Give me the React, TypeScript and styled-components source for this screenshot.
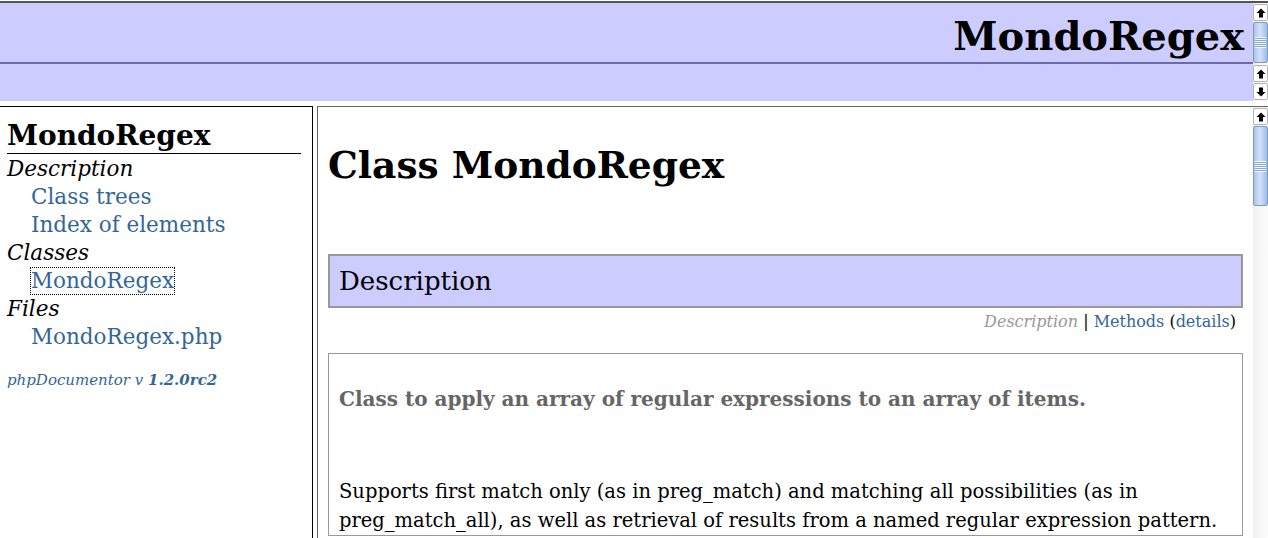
import React from 'react';
import styled, { createGlobalStyle } from 'styled-components';

const GlobalStyle = createGlobalStyle`
  html, body {
    margin: 0;
    padding: 0;
    background: #ffffff;
  }
  body {
    font-family: "DejaVu Serif", Georgia, serif;
    color: #000;
    overflow: hidden;
  }
`

const Page = styled.div`
  width: 1268px;
  height: 538px;
  display: flex;
  flex-direction: column;
  overflow: hidden;
`

/* ---------- scrollbars ---------- */

const ScrollBar = styled.div`
  width: 15px;
  flex: none;
  display: flex;
  flex-direction: column;
  gap: 1px;
  padding-top: 1px;
  background: linear-gradient(to right, #f1f1f1, #fcfcfc);
`

const ArrowButton = styled.div<{ $h?: number }>`
  height: ${({ $h }) => $h ?? 17}px;
  flex: none;
  box-sizing: border-box;
  border: 1px solid #b4b4b4;
  border-radius: 2px;
  background: #ffffff;
  display: flex;
  align-items: center;
  justify-content: center;
`

const Thumb = styled.div<{ $h: number }>`
  height: ${({ $h }) => $h}px;
  flex: none;
  box-sizing: border-box;
  border: 1px solid #7f9db9;
  border-radius: 2px;
  background: linear-gradient(to right, #a9c3ec, #d3e2f9 45%, #bcd2f4 70%, #9fbbe8);
  display: flex;
  align-items: center;
  justify-content: center;
`

const Grip = styled.div`
  width: 11px;
  height: 11px;
  background: repeating-linear-gradient(
    to bottom,
    #f4f8ff 0px,
    #f4f8ff 1px,
    #8ca9d6 1px,
    #8ca9d6 2px
  );
`

const Arrow: React.FC<{ down?: boolean }> = ({ down }) => (
  <svg width="10" height="10" viewBox="0 0 10 10" style={down ? { transform: 'rotate(180deg)' } : undefined}>
    <path d="M5 0.5 L9.5 5 L7 5 L7 9.5 L3 9.5 L3 5 L0.5 5 Z" fill="#000" />
  </svg>
)

/* ---------- top frames ---------- */

const TitleFrame = styled.div`
  margin-top: 1px;
  border-top: 2px solid #555555;
  height: 61px;
  display: flex;
  background: #ccccff;
`

const TitleArea = styled.div`
  flex: 1;
  display: flex;
  flex-direction: column;
`

const TitleText = styled.h1`
  margin: 0;
  height: 59px;
  box-sizing: border-box;
  padding-right: 9px;
  text-align: right;
  font-size: 40px;
  line-height: 66px;
  font-weight: 700;
  overflow: hidden;
`

const TitleRule = styled.div`
  height: 2px;
  background: #6b6ba9;
`

const NavFrame = styled.div`
  height: 37px;
  display: flex;
  background: #ccccff;
`

const NavArea = styled.div`
  flex: 1;
`

const FrameGap = styled.div`
  height: 5px;
  background: #ffffff;
`

/* ---------- lower frames ---------- */

const Frames = styled.div`
  flex: 1;
  display: flex;
  gap: 4px;
  min-height: 0;
`

const LeftFrame = styled.div`
  width: 313px;
  flex: none;
  box-sizing: border-box;
  border-top: 1px solid #000;
  border-right: 1px solid #000;
  padding: 11px 11px 0 7px;
`

const SideTitle = styled.h2`
  margin: 0;
  font-size: 28px;
  line-height: 35px;
  font-weight: 700;
  border-bottom: 1px solid #000;
`

const SideList = styled.div`
  display: flex;
  flex-direction: column;
  padding-top: 1px;
`

const SideSection = styled.div`
  font-style: italic;
  font-size: 21.5px;
  line-height: 28px;
`

const SideLink = styled.a<{ $focused?: boolean }>`
  align-self: flex-start;
  margin-left: 24px;
  font-size: 21.5px;
  line-height: 26px;
  margin-top: 1px;
  margin-bottom: 1px;
  color: #336699;
  text-decoration: none;
  outline: ${({ $focused }) => ($focused ? '1px dotted #000' : 'none')};
`

const Credit = styled.div`
  margin-top: 20px;
  font-size: 15px;
  font-style: italic;
  color: #336699;
  b {
    font-weight: 700;
  }
`

const RightFrame = styled.div`
  flex: 1;
  display: flex;
  border-top: 1px solid #666666;
  border-left: 1px solid #666666;
  min-width: 0;
`

const MainContent = styled.div`
  flex: 1;
  padding: 0 10px;
  overflow: hidden;
`

const ClassTitle = styled.h1`
  margin: 30px 0 0;
  font-size: 37.5px;
  line-height: 56px;
  font-weight: 700;
`

const SectionHead = styled.div`
  margin-top: 61px;
  height: 54px;
  box-sizing: border-box;
  border: 2px solid #999999;
  background: #ccccff;
  padding-left: 9px;
  font-size: 26px;
  line-height: 50px;
`

const NavLine = styled.div`
  text-align: right;
  padding-right: 7px;
  font-size: 16px;
  line-height: 28px;
  i {
    color: #999999;
  }
`

const NavLinkText = styled.a`
  color: #336699;
  text-decoration: none;
`

const InfoBox = styled.div`
  margin-top: 17px;
  border: 1px solid #999999;
  padding: 0 10px;
`

const Summary = styled.p`
  margin: 30px 0 0;
  font-size: 20px;
  line-height: 30px;
  font-weight: 700;
  color: #666666;
`

const Body = styled.p`
  margin: 63px 0 0;
  font-size: 19.5px;
  line-height: 29px;
`

export default function App() {
  return (
    <Page>
      <GlobalStyle />
      <TitleFrame>
        <TitleArea>
          <TitleText>MondoRegex</TitleText>
          <TitleRule />
        </TitleArea>
        <ScrollBar>
          <ArrowButton>
            <Arrow />
          </ArrowButton>
          <Thumb $h={41}>
            <Grip />
          </Thumb>
        </ScrollBar>
      </TitleFrame>
      <NavFrame>
        <NavArea />
        <ScrollBar>
          <ArrowButton $h={17}>
            <Arrow />
          </ArrowButton>
          <ArrowButton $h={17}>
            <Arrow down />
          </ArrowButton>
        </ScrollBar>
      </NavFrame>
      <FrameGap />
      <Frames>
        <LeftFrame>
          <SideTitle>MondoRegex</SideTitle>
          <SideList>
            <SideSection>Description</SideSection>
            <SideLink href="#">Class trees</SideLink>
            <SideLink href="#">Index of elements</SideLink>
            <SideSection>Classes</SideSection>
            <SideLink href="#" $focused>MondoRegex</SideLink>
            <SideSection>Files</SideSection>
            <SideLink href="#">MondoRegex.php</SideLink>
          </SideList>
          <Credit>
            phpDocumentor v <b>1.2.0rc2</b>
          </Credit>
        </LeftFrame>
        <RightFrame>
          <MainContent>
            <ClassTitle>Class MondoRegex</ClassTitle>
            <SectionHead>Description</SectionHead>
            <NavLine>
              <i>Description</i> | <NavLinkText href="#">Methods</NavLinkText> (
              <NavLinkText href="#">details</NavLinkText>)
            </NavLine>
            <InfoBox>
              <Summary>Class to apply an array of regular expressions to an array of items.</Summary>
              <Body>
                Supports first match only (as in preg_match) and matching all possibilities (as in
                preg_match_all), as well as retrieval of results from a named regular expression pattern.
              </Body>
            </InfoBox>
          </MainContent>
          <ScrollBar>
            <ArrowButton>
              <Arrow />
            </ArrowButton>
            <Thumb $h={80}>
              <Grip />
            </Thumb>
          </ScrollBar>
        </RightFrame>
      </Frames>
    </Page>
  );
}
